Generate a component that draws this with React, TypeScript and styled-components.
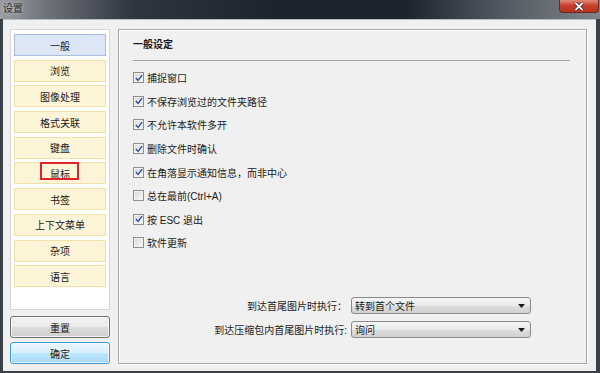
import * as React from 'react'
import styled, { createGlobalStyle } from 'styled-components'

const GlobalStyle = createGlobalStyle`
  html, body {
    margin: 0;
    padding: 0;
    background: #2a3038;
  }
  body {
    font-family: 'Liberation Sans', 'Noto Sans CJK SC', sans-serif;
    font-size: 10px;
    color: #1a1a1a;
  }
`

const Window = styled.div`
  width: 600px;
  height: 373px;
  display: flex;
  flex-direction: column;
  background: #3a4048;
  overflow: hidden;
`

const TitleBar = styled.div`
  height: 19px;
  flex: none;
  display: flex;
  align-items: flex-start;
  justify-content: space-between;
  background: linear-gradient(
    to right,
    #9a9da2 0%,
    #6d7178 8%,
    #2f3641 22%,
    #1c2430 45%,
    #1c2430 68%,
    #4d545d 82%,
    #80848a 100%
  );
`

const Title = styled.span`
  padding: 2px 0 0 3px;
  font-size: 10px;
  line-height: 14px;
  color: #2a2a2a;
  text-shadow: 0 0 4px rgba(255, 255, 255, 0.7);
`

const CloseButton = styled.div`
  width: 38px;
  height: 12px;
  margin-right: 1px;
  border: 1px solid #6b2a22;
  border-top: none;
  border-radius: 0 0 4px 4px;
  background: linear-gradient(#e08a7a 0%, #c8412c 45%, #b9321f 100%);
  display: flex;
  align-items: center;
  justify-content: center;
`

const Client = styled.div`
  flex: 1;
  display: flex;
  gap: 8px;
  margin: 0 4px 3px 3px;
  padding: 9px 9px 7px 7px;
  background: #f0f0f0;
  border-top: 1px solid #b9bdc2;
`

const Sidebar = styled.div`
  width: 100px;
  display: flex;
  flex-direction: column;
`

const NavList = styled.div`
  height: 281px;
  box-sizing: border-box;
  background: #fff;
  border: 1px solid #d6d6d6;
  padding: 4px 3px;
  display: flex;
  flex-direction: column;
  gap: 3.7px;
`

const NavItem = styled.div<{ $active?: boolean }>`
  position: relative;
  height: 22px;
  box-sizing: border-box;
  display: flex;
  align-items: center;
  justify-content: center;
  font-size: 10px;
  color: #1a1a1a;
  background: ${({ $active }) => ($active ? '#dde6f5' : '#fef4d8')};
  border: 1px solid ${({ $active }) => ($active ? '#a9bde0' : '#f3dfa8')};
`

const Highlight = styled.span`
  position: absolute;
  left: 25px;
  top: -1px;
  width: 39px;
  height: 18px;
  box-sizing: border-box;
  border: 2px solid #e0242c;
`

const PushButton = styled.div<{ $primary?: boolean }>`
  height: 22px;
  box-sizing: border-box;
  margin-top: ${({ $primary }) => ($primary ? '4px' : '6px')};
  display: flex;
  align-items: center;
  justify-content: center;
  border-radius: 3px;
  font-size: 10px;
  border: 1px solid ${({ $primary }) => ($primary ? '#3c9bd8' : '#707070')};
  background: ${({ $primary }) =>
    $primary
      ? 'linear-gradient(#eaf6fd 0%, #d9effb 48%, #bee6fd 52%, #a7d9f5 100%)'
      : 'linear-gradient(#f2f2f2 0%, #ebebeb 48%, #dddddd 52%, #cfcfcf 100%)'};
  box-shadow: inset 0 0 0 1px rgba(255, 255, 255, 0.7);
`

const Panel = styled.div`
  flex: 1;
  box-sizing: border-box;
  border: 1px solid #a8a8a8;
  box-shadow: inset 1px 1px 0 #fff, 1px 1px 0 #fff;
  padding: 7px 16px 0 14px;
  display: flex;
  flex-direction: column;
`

const PanelTitle = styled.div`
  font-weight: bold;
  font-size: 10px;
  line-height: 16px;
  padding-bottom: 7px;
  border-bottom: 1px solid #a0a0a0;
  margin-bottom: 5px;
`

const OptionList = styled.div`
  display: flex;
  flex-direction: column;
`

const Option = styled.label`
  height: 23.6px;
  display: flex;
  align-items: center;
  gap: 3px;
  font-size: 10px;
  color: #1a1a1a;
`

const Box = styled.span`
  width: 11px;
  height: 11px;
  box-sizing: border-box;
  border: 1px solid #8f8f8f;
  background: linear-gradient(135deg, #d6d6d6 0%, #f0f0f0 70%, #fff 100%);
  box-shadow: inset 0 0 0 1px #f2f2f2;
  display: flex;
  align-items: center;
  justify-content: center;
`

const Footer = styled.div`
  margin-top: auto;
  margin-bottom: 25px;
  display: grid;
  grid-template-columns: 1fr 180px;
  column-gap: 4px;
  row-gap: 7px;
  padding-right: 39px;
  align-items: center;
`

const FieldLabel = styled.span`
  text-align: right;
  font-size: 10px;
  color: #1a1a1a;
`

const Select = styled.div`
  height: 17px;
  box-sizing: border-box;
  border: 1px solid #8a8a8a;
  border-radius: 3px;
  background: linear-gradient(#f4f4f4 0%, #ebebeb 50%, #dcdcdc 52%, #d2d2d2 100%);
  display: flex;
  align-items: center;
  justify-content: space-between;
  padding: 0 5px 0 3px;
  font-size: 10px;
  color: #1a1a1a;
`

const Check = () => (
  <svg width="8" height="8" viewBox="0 0 9 9">
    <path d="M1 4.5 L3.5 7.2 L8 1.2" fill="none" stroke="#2c4fa3" strokeWidth="1.6" />
  </svg>
)

const Arrow = () => (
  <svg width="7" height="4" viewBox="0 0 7 4">
    <path d="M0 0 H7 L3.5 4 Z" fill="#1a1a1a" />
  </svg>
)

const navItems = ['一般', '浏览', '图像处理', '格式关联', '键盘', '鼠标', '书签', '上下文菜单', '杂项', '语言']

const options = [
  { label: '捕捉窗口', checked: true },
  { label: '不保存浏览过的文件夹路径', checked: true },
  { label: '不允许本软件多开', checked: true },
  { label: '删除文件时确认', checked: true },
  { label: '在角落显示通知信息，而非中心', checked: true },
  { label: '总在最前(Ctrl+A)', checked: false },
  { label: '按 ESC 退出', checked: true },
  { label: '软件更新', checked: false }
]

export default function App() {
  return (
    <>
      <GlobalStyle />
      <Window>
        <TitleBar>
          <Title>设置</Title>
          <CloseButton>
            <svg width="10" height="9" viewBox="0 0 10 9">
              <path d="M1.5 1 L8.5 8 M8.5 1 L1.5 8" stroke="#3a1a14" strokeWidth="3.4" />
              <path d="M1.5 1 L8.5 8 M8.5 1 L1.5 8" stroke="#fff" strokeWidth="1.8" />
            </svg>
          </CloseButton>
        </TitleBar>
        <Client>
          <Sidebar>
            <NavList>
              {navItems.map((item, i) => (
                <NavItem key={item} $active={i === 0}>
                  {item}
                  {item === '鼠标' && <Highlight />}
                </NavItem>
              ))}
            </NavList>
            <PushButton>重置</PushButton>
            <PushButton $primary>确定</PushButton>
          </Sidebar>
          <Panel>
            <PanelTitle>一般设定</PanelTitle>
            <OptionList>
              {options.map((o) => (
                <Option key={o.label}>
                  <Box>{o.checked && <Check />}</Box>
                  {o.label}
                </Option>
              ))}
            </OptionList>
            <Footer>
              <FieldLabel>到达首尾图片时执行：</FieldLabel>
              <Select>
                转到首个文件
                <Arrow />
              </Select>
              <FieldLabel>到达压缩包内首尾图片时执行:</FieldLabel>
              <Select>
                询问
                <Arrow />
              </Select>
            </Footer>
          </Panel>
        </Client>
      </Window>
    </>
  )
}
